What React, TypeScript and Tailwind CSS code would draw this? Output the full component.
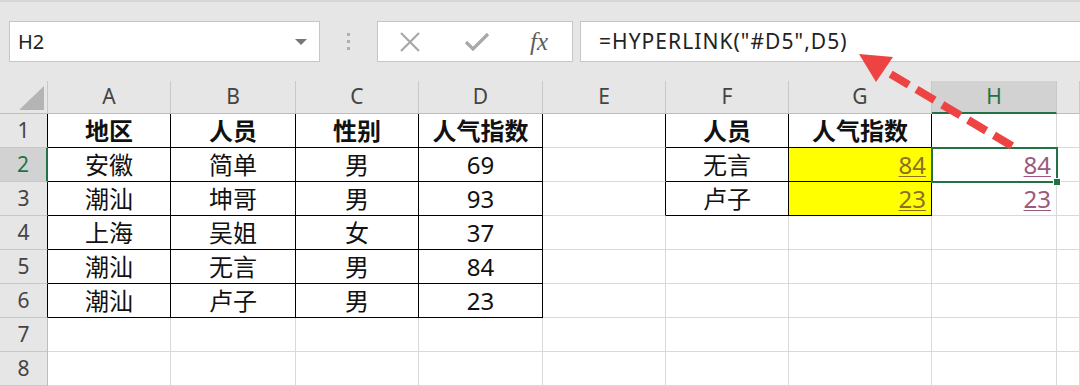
import React from "react";
import clsx from "clsx";

const letters = ["A", "B", "C", "D", "E", "F", "G", "H", ""];

const rows: string[][] = [
  ["地区", "人员", "性别", "人气指数", "", "人员", "人气指数", "", ""],
  ["安徽", "简单", "男", "69", "", "无言", "84", "84", ""],
  ["潮汕", "坤哥", "男", "93", "", "卢子", "23", "23", ""],
  ["上海", "吴姐", "女", "37", "", "", "", "", ""],
  ["潮汕", "无言", "男", "84", "", "", "", "", ""],
  ["潮汕", "卢子", "男", "23", "", "", "", "", ""],
  ["", "", "", "", "", "", "", "", ""],
  ["", "", "", "", "", "", "", "", ""],
];

function Toolbar() {
  return (
    <div className="flex h-[81px] items-start border-t-2 border-[#d6d6d6] bg-[#e6e6e6] pt-[19px]">
      <div className="ml-[9px] flex h-[41px] w-[311px] items-center justify-between border border-[#c6c6c6] bg-white pl-[8px] pr-[12px]">
        <span className="text-[20px] text-[#222]">H2</span>
        <span className="h-0 w-0 border-x-[6px] border-t-[6px] border-x-transparent border-t-[#767676]" />
      </div>
      <div className="flex h-[41px] w-[57px] flex-col items-center justify-center gap-[4px]">
        <span className="h-[3px] w-[3px] bg-[#b0b0b0]" />
        <span className="h-[3px] w-[3px] bg-[#b0b0b0]" />
        <span className="h-[3px] w-[3px] bg-[#b0b0b0]" />
      </div>
      <div className="flex h-[41px] w-[196px] items-center border border-[#c6c6c6] bg-white">
        <svg width="22" height="20" viewBox="0 0 22 20" className="ml-[21px]">
          <path d="M2 1 L20 19 M20 1 L2 19" stroke="#a8a8a8" strokeWidth="2.2" />
        </svg>
        <svg width="26" height="20" viewBox="0 0 26 20" className="ml-[43px]">
          <path d="M2 10 L9 17 L24 2" stroke="#a8a8a8" strokeWidth="3.2" fill="none" />
        </svg>
        <span className="ml-[40px] font-['Liberation_Serif',serif] text-[25px] italic text-[#5e5e5e]">fx</span>
      </div>
      <div className="ml-[7px] flex h-[41px] flex-1 items-center border-y border-l border-[#c6c6c6] bg-white pl-[18px]">
        <span className="text-[21px] tracking-[0.05em] text-[#222]">=HYPERLINK("#D5",D5)</span>
      </div>
    </div>
  );
}

function Cell({ r, c, v }: { r: number; c: number; v: string }) {
  const inT1 = r <= 5 && c <= 3;
  const inT2 = r <= 2 && (c === 5 || c === 6);
  const rightBlack = inT1 || inT2 || (c === 4 && r <= 2);
  const yellow = (r === 1 || r === 2) && c === 6;
  const bold = r === 0 && (inT1 || inT2);
  const link = (r === 1 || r === 2) && (c === 6 || c === 7);
  const active = r === 1 && c === 7;

  return (
    <div
      className={clsx(
        "relative flex items-center border-b border-r text-[24px] leading-none",
        rightBlack ? "border-r-black" : "border-r-[#d9d9d9]",
        inT1 || inT2 ? "border-b-black" : "border-b-[#d9d9d9]",
        yellow ? "bg-[#ffff00]" : "bg-white",
        link ? "justify-end pr-[5px] underline decoration-1 underline-offset-[2px]" : "justify-center text-[#111]",
        link && c === 6 && "text-[#8c7024]",
        link && c === 7 && "text-[#9a5a7c]",
        bold && "font-bold"
      )}
    >
      {v}
      {active && (
        <div className="absolute -left-[1px] -top-[1px] z-10 h-[36px] w-[127px] border-2 border-[#217346]">
          <div className="absolute -bottom-[5px] -right-[5px] h-[8px] w-[8px] border border-white bg-[#217346]" />
        </div>
      )}
    </div>
  );
}

function Sheet() {
  return (
    <div className="grid grid-cols-[48px_123px_125px_123px_124px_123px_123px_143px_125px_1fr] grid-rows-[33px_repeat(8,34px)]">
      <div className="relative border-b border-r border-b-[#bdbdbd] border-r-[#c8c8c8] bg-[#e6e6e6]">
        <svg width="26" height="24" viewBox="0 0 26 24" className="absolute bottom-[3px] right-[2px]">
          <polygon points="25,0 25,24 0,24" fill="#b4b4b4" />
        </svg>
      </div>
      {letters.map((l, c) => (
        <div
          key={c}
          className={clsx(
            "flex items-center justify-center border-r border-r-[#c8c8c8] text-[21px]",
            c === 7
              ? "border-b-2 border-b-[#217346] bg-[#d2d2d2] text-[#217346]"
              : "border-b border-b-[#bdbdbd] bg-[#e6e6e6] text-[#444]"
          )}
        >
          {l}
        </div>
      ))}
      {rows.map((row, r) => (
        <React.Fragment key={r}>
          <div
            className={clsx(
              "flex items-center justify-center border-b border-b-[#c8c8c8] text-[21px]",
              r === 1
                ? "border-r-2 border-r-[#217346] bg-[#d2d2d2] text-[#217346]"
                : "border-r bg-[#e6e6e6] text-[#444]",
              r !== 1 && (r <= 5 ? "border-r-black" : "border-r-[#bdbdbd]")
            )}
          >
            {r + 1}
          </div>
          {row.map((v, c) => (
            <Cell key={c} r={r} c={c} v={v} />
          ))}
        </React.Fragment>
      ))}
    </div>
  );
}

export default function App() {
  return (
    <div className="relative h-[386px] w-[1080px] overflow-hidden bg-white font-['Noto_Sans','Noto_Sans_CJK_SC',sans-serif]">
      <Toolbar />
      <Sheet />
      <svg width="1080" height="386" className="pointer-events-none absolute left-0 top-0 z-20">
        <line x1="1012" y1="146" x2="882" y2="69" stroke="#ee4343" strokeWidth="8" strokeDasharray="21 9" />
        <polygon points="859,54 893,57 876,82" fill="#ee4343" />
      </svg>
    </div>
  );
}
